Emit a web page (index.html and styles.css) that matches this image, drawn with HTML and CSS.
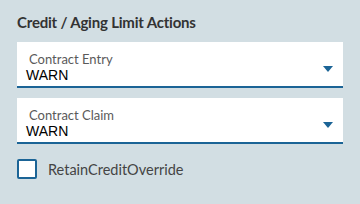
FILE: index.html
```html
<!DOCTYPE html>
<html lang="en">
<head>
    <meta charset="UTF-8">
    <meta name="viewport" content="width=device-width, initial-scale=1.0">
    <title>Credit / Aging Limit Actions</title>
    <link rel="stylesheet" href="styles.css">
</head>
<body>
    <div class="panel">
        <h2>Credit / Aging Limit Actions</h2>

        <div class="field">
            <div class="field-text">
                <span class="label">Contract Entry</span>
                <span class="value">WARN</span>
            </div>
            <span class="caret"></span>
        </div>

        <div class="field">
            <div class="field-text">
                <span class="label">Contract Claim</span>
                <span class="value">WARN</span>
            </div>
            <span class="caret"></span>
        </div>

        <label class="check">
            <span class="box"></span>
            <span>RetainCreditOverride</span>
        </label>
    </div>
</body>
</html>
```

FILE: styles.css
```css
*{
    margin: 0;
    padding: 0;
    box-sizing: border-box;
}
body{
    background-color: #d2dee3;
    font-family: Lato, "Open Sans", sans-serif;
}
.panel{
    width: 360px;
    padding: 12px 17px;
}
h2{
    font-size: 15px;
    font-weight: bold;
    letter-spacing: -0.2px;
    color: #333;
    line-height: 20px;
    margin-bottom: 10px;
}
.field{
    display: flex;
    align-items: center;
    height: 46px;
    padding: 5px 10px 0 9px;
    margin-bottom: 10px;
    background-color: #fff;
    border-bottom: 2px solid #1b6496;
}
.field-text{
    display: flex;
    flex-direction: column;
}
.label{
    font-size: 13px;
    line-height: 16px;
    color: #5a5a5a;
    margin-left: 3px;
}
.value{
    font-family: "Liberation Sans", Arial, sans-serif;
    font-size: 14px;
    line-height: 16px;
    color: #000;
}
/* 下拉箭头 */
.caret{
    margin-left: auto;
    margin-top: 4px;
    width: 0;
    height: 0;
    border-left: 5.5px solid transparent;
    border-right: 5.5px solid transparent;
    border-top: 6px solid #1b6496;
}
.check{
    display: flex;
    align-items: center;
    margin-top: 15px;
    font-size: 14.5px;
    color: #444;
}
.box{
    width: 20px;
    height: 20px;
    margin-right: 11px;
    background-color: #fff;
    border: 2px solid #1b6496;
    border-radius: 2px;
}
```
